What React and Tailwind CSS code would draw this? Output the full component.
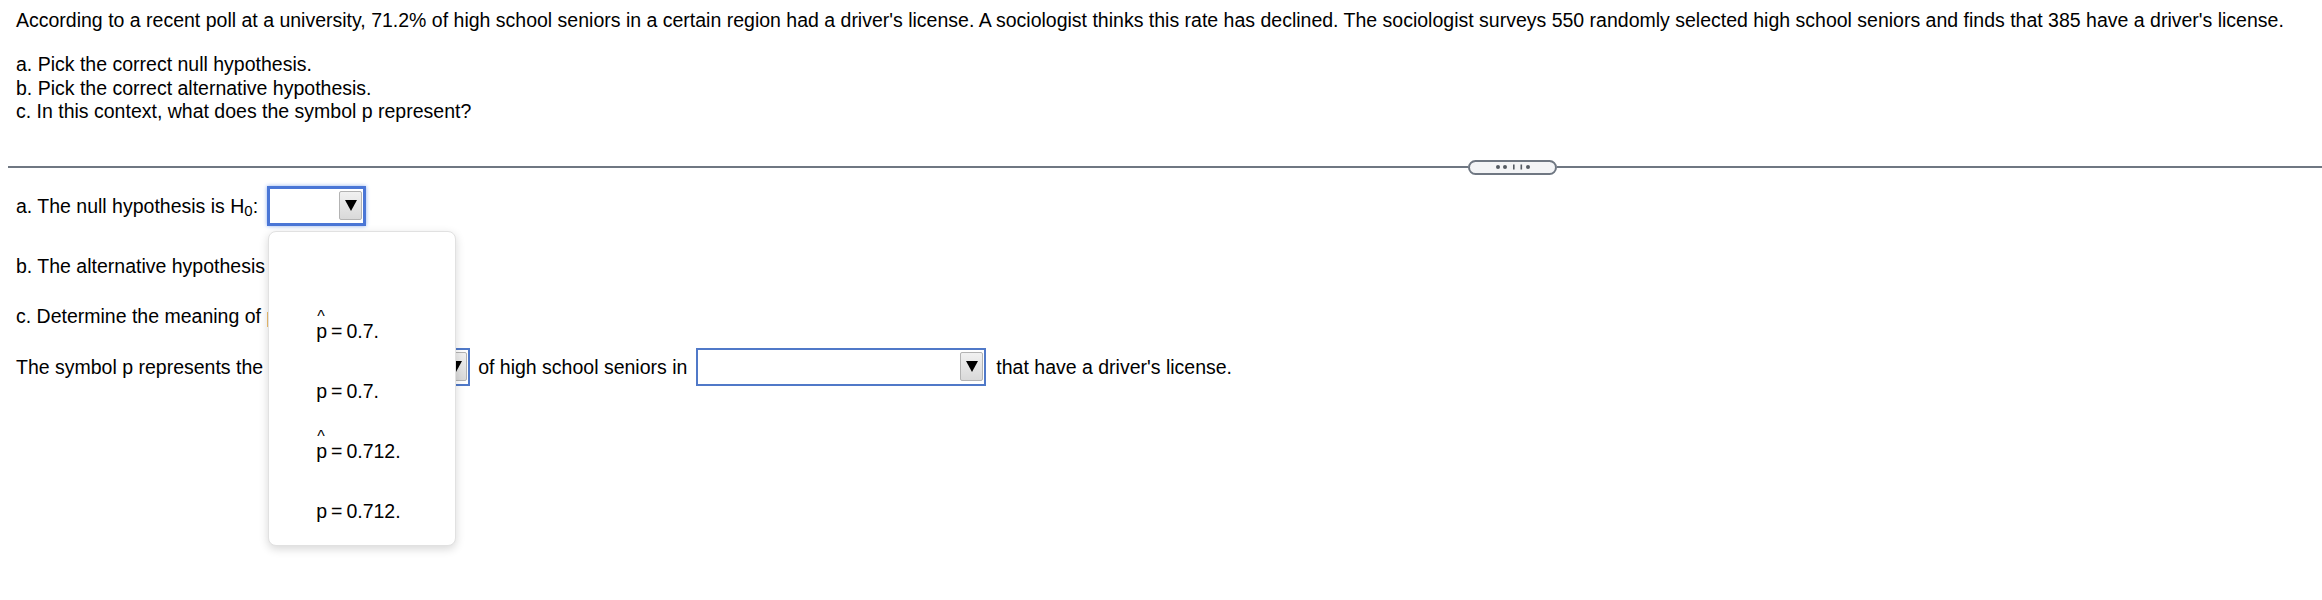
import React from 'react';

const FONT = { fontFamily: '"Liberation Sans", Arial, Helvetica, sans-serif' };

const OPTIONS = [
  { hat: true, value: '0.7.' },
  { hat: false, value: '0.7.' },
  { hat: true, value: '0.712.' },
  { hat: false, value: '0.712.' },
];

function P({ hat }) {
  return (
    <span className="relative inline-block">
      p
      {hat && (
        <span className="absolute left-[1px] top-[-10px] text-[16px] leading-none">^</span>
      )}
    </span>
  );
}

function Arrow() {
  return (
    <span className="flex items-center justify-center w-[23px] h-[29px] bg-gradient-to-b from-[#f1f1f1] to-[#d9d9d9] border border-[#b3b3b3] rounded-[2px]">
      <svg width="12" height="11" viewBox="0 0 12 11">
        <path d="M0 0 H12 L6 11 Z" fill="#000" />
      </svg>
    </span>
  );
}

function Select({ width, focused, children }) {
  return (
    <span
      className={`relative inline-flex items-center justify-end pr-[1px] bg-white shrink-0 ${
        focused
          ? 'h-[40px] border-[3px] border-[#4a76d6] shadow-[0_0_4px_#8fb0ee]'
          : 'h-[38px] border-2 border-[#5079c8]'
      }`}
      style={{ width }}
    >
      <Arrow />
      {children}
    </span>
  );
}

function Popup() {
  return (
    <div className="absolute left-[-2px] top-[42px] z-10 w-[188px] h-[315px] bg-white border border-[#e1e1e1] rounded-[8px] shadow-[0_3px_10px_rgba(0,0,0,0.16)] pt-[9px]">
      <div className="h-[60px]" />
      {OPTIONS.map((o, i) => (
        <div key={i} className="h-[60px] flex items-center pl-[47px] text-[19.5px] text-black">
          <P hat={o.hat} />
          <span className="mx-[4px]">=</span>
          <span>{o.value}</span>
        </div>
      ))}
    </div>
  );
}

function Handle() {
  return (
    <span className="flex items-center justify-center w-[89px] h-[15px] border-2 border-[#6f7782] bg-[#f3f4f6] rounded-full shrink-0">
      <svg width="36" height="6" viewBox="0 0 36 6">
        <circle cx="3" cy="3" r="2" fill="#555b63" />
        <circle cx="10" cy="3" r="2" fill="#555b63" />
        <rect x="18" y="0.5" width="1.6" height="5" fill="#555b63" />
        <rect x="25.5" y="0.5" width="1.6" height="5" fill="#555b63" />
        <circle cx="33" cy="3" r="2" fill="#555b63" />
      </svg>
    </span>
  );
}

export default function App() {
  return (
    <div className="w-[2322px] h-[600px] bg-white text-black overflow-hidden" style={FONT}>
      {/* question text */}
      <div className="pl-4 pt-2 text-[19.5px] leading-[24px]">
        <p className="whitespace-nowrap">
          According to a recent poll at a university, 71.2% of high school seniors in a certain region had a driver's license. A sociologist thinks this rate has declined. The sociologist surveys 550 randomly selected high school seniors and finds that 385 have a driver's license.
        </p>
        <div className="mt-[21px] leading-[23.5px]">
          <p>a. Pick the correct null hypothesis.</p>
          <p>b. Pick the correct alternative hypothesis.</p>
          <p>c. In this context, what does the symbol p represent?</p>
        </div>
      </div>

      {/* divider with handle */}
      <div className="flex items-center ml-2 mt-[36px] h-[15px]">
        <div className="flex-1 h-[2px] bg-[#6f7782]" />
        <Handle />
        <div className="w-[765px] h-[2px] bg-[#6f7782]" />
      </div>

      {/* answers */}
      <div className="pl-4 text-[19.5px] leading-[24px]">
        <div className="flex items-center mt-[11px] h-[40px] whitespace-nowrap">
          <span>
            a. The null hypothesis is H<sub className="text-[15px] relative top-[3px]">0</sub>:
          </span>
          <span className="ml-[9px]">
            <Select width={99} focused>
              <Popup />
            </Select>
          </span>
        </div>

        <div className="flex items-center mt-[20px] h-[40px] whitespace-nowrap">
          <span>
            b. The alternative hypothesis is H<sub className="text-[15px] relative top-[3px]">a</sub>:
          </span>
          <span className="ml-[9px]">
            <Select width={99} />
          </span>
        </div>

        <p className="mt-[18px] whitespace-nowrap">c. Determine the meaning of p.</p>

        <div className="flex items-center mt-[20px] h-[38px] whitespace-nowrap">
          <span>The symbol p represents the</span>
          <span className="ml-[8px]">
            <Select width={199} />
          </span>
          <span className="ml-[8px]">of high school seniors in</span>
          <span className="ml-[9px]">
            <Select width={290} />
          </span>
          <span className="ml-[10px]">that have a driver's license.</span>
        </div>
      </div>
    </div>
  );
}
